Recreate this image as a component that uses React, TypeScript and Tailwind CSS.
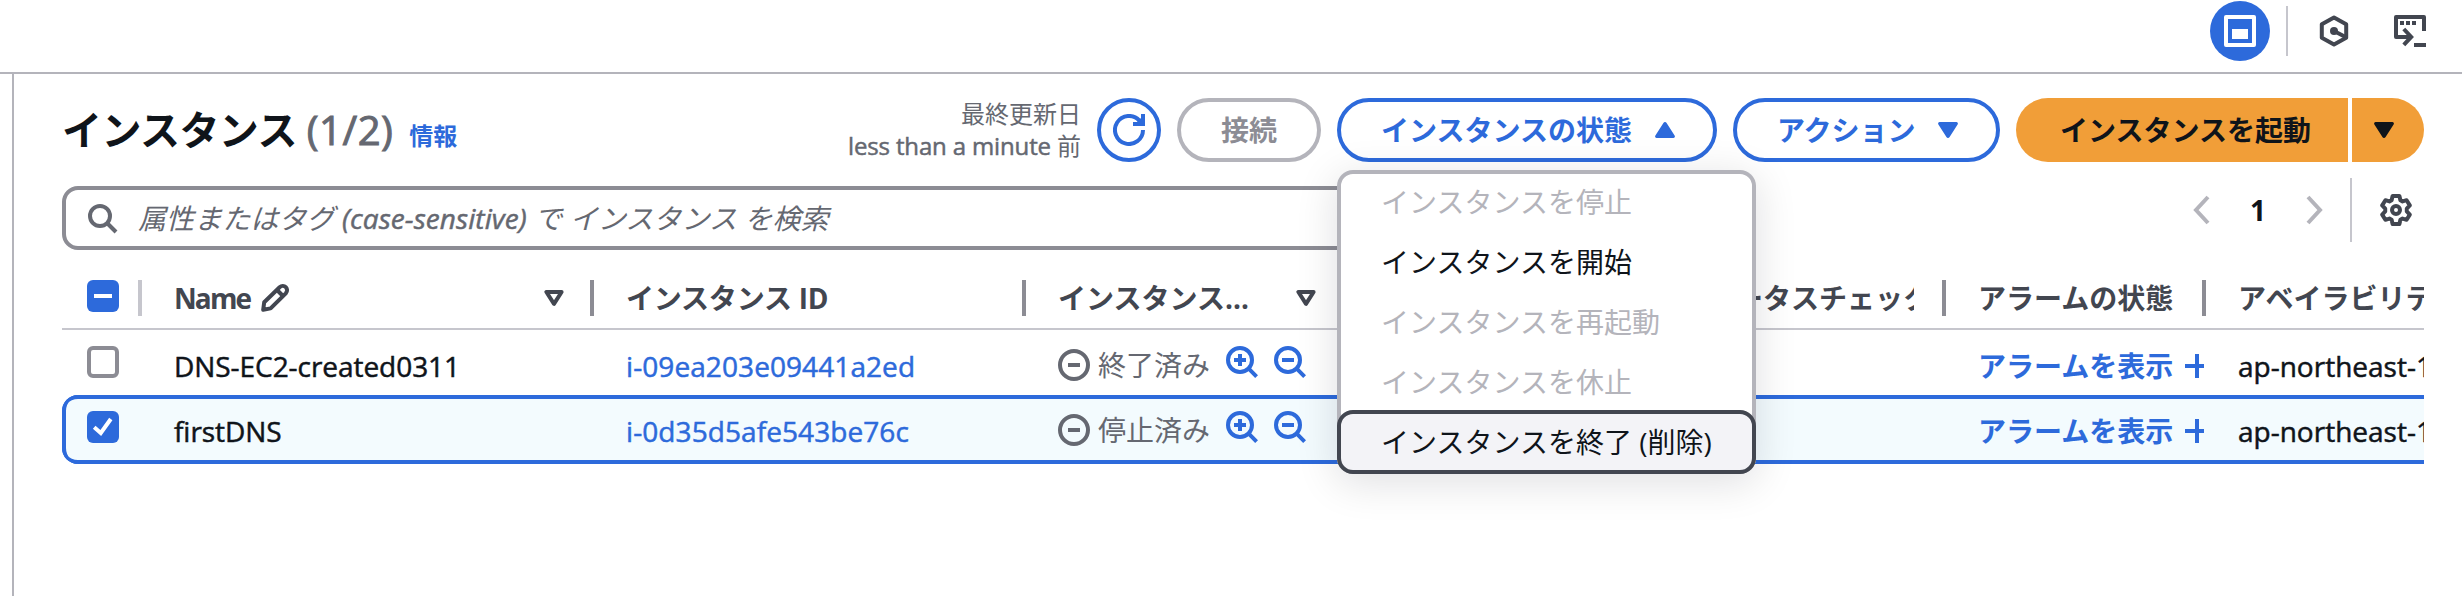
import { ReactNode } from 'react';
import clsx from 'clsx';

const jp = "font-['Open_Sans','Noto_Sans_CJK_JP',sans-serif]";

// slightly heavier latin text, between regular and semibold
const sturdy = '[-webkit-text-stroke:0.5px_currentColor]';

function Icon({ children, className }: { children: ReactNode; className?: string }) {
  return (
    <svg viewBox="0 0 16 16" fill="none" stroke="currentColor" strokeWidth={2} className={clsx('size-8 shrink-0', className)}>
      {children}
    </svg>
  );
}

function Caret({ up, className }: { up?: boolean; className?: string }) {
  return (
    <svg viewBox="0 0 20 16" fill="currentColor" className={clsx('h-4 w-5 shrink-0', up && 'rotate-180', className)}>
      <path d="M1.8 0h16.4a1.6 1.6 0 0 1 1.4 2.5l-8 12.6a1.9 1.9 0 0 1-3.2 0L.4 2.5A1.6 1.6 0 0 1 1.8 0Z" />
    </svg>
  );
}

function SortCaret() {
  return (
    <svg viewBox="0 0 20 16" fill="none" stroke="currentColor" strokeWidth={4} strokeLinejoin="round" className="h-4 w-5 shrink-0">
      <path d="M2.4 2h15.2L10 13.8Z" />
    </svg>
  );
}

const SearchIcon = () => (
  <Icon className="text-[#656871]">
    <circle cx="7" cy="7" r="5" />
    <path d="m15 15-4.5-4.5" />
  </Icon>
);

const ZoomIcon = ({ plus }: { plus?: boolean }) => (
  <Icon>
    <circle cx="7" cy="7" r="6" />
    <path d="m15.3 15.3-4.2-4.2M4 7h6" />
    {plus && <path d="M7 4v6" />}
  </Icon>
);

const StoppedIcon = () => (
  <Icon className="text-[#656871]">
    <circle cx="8" cy="8" r="7" />
    <path d="M5 8h6" />
  </Icon>
);

function Checkbox({ state }: { state: 'on' | 'off' | 'mixed' }) {
  if (state === 'off') {
    return <span className="block size-8 shrink-0 rounded-md border-4 border-[#8c8c94] bg-white" />;
  }
  return (
    <span className="block size-8 shrink-0 rounded-md bg-[#2d6adb] text-white">
      <Icon>{state === 'on' ? <path d="m3.6 8.1 3.3 2.9 5-7" /> : <path d="M3.5 8h9" />}</Icon>
    </span>
  );
}

function Divider({ light }: { light?: boolean }) {
  return <span className={clsx('h-9 w-1 shrink-0', light ? 'bg-[#c6c6cd]' : 'bg-[#8c8c94]')} />;
}

const cols = 'grid grid-cols-[80px_452px_432px_620px_300px_260px_218px] w-[2362px]';

const rows = [
  { name: 'DNS-EC2-created0311', id: 'i-09ea203e09441a2ed', state: '終了済み', selected: false },
  { name: 'firstDNS', id: 'i-0d35d5afe543be76c', state: '停止済み', selected: true },
];

const menu = [
  { label: 'インスタンスを停止', disabled: true },
  { label: 'インスタンスを開始' },
  { label: 'インスタンスを再起動', disabled: true },
  { label: 'インスタンスを休止', disabled: true },
  { label: 'インスタンスを終了 (削除)', active: true },
];

function TopBar() {
  return (
    <header className="flex h-[74px] items-start justify-end border-b-2 border-[#b4b4bb] pr-9 text-[#424650]">
      <span className="mt-px flex size-[60px] items-center justify-center rounded-full bg-[#2d6adb] text-white">
        <Icon>
          <path d="M1 1h14v14H1z" strokeLinejoin="round" />
          <path d="M4 7h8v5H4z" fill="currentColor" stroke="none" />
        </Icon>
      </span>
      <span className="mt-1.5 ml-4 h-[50px] w-0.5 bg-[#c6c6cd]" />
      <Icon className="mt-[15px] ml-[30px]">
        <path d="M8 1.2 14.1 4.6v6.8L8 14.8 1.9 11.4V4.6Z" strokeLinejoin="round" />
        <circle cx="8" cy="8" r="2" fill="currentColor" stroke="none" />
        <path d="m8 8 5.5 2.9" />
      </Icon>
      <Icon className="mt-[15px] ml-11">
        <path d="M15 8V1H1v10h7.5" strokeLinejoin="round" />
        <path d="M4.9 7 8.6 11 4.9 14.9M10 15h6" />
        <path d="M3 4h2M6 4h2M9 4h2" />
      </Icon>
    </header>
  );
}

function StateMenu() {
  return (
    <ul className="absolute top-[72px] left-0 z-10 w-[419px] rounded-2xl bg-white shadow-[0_8px_40px_2px_rgba(0,7,22,0.12)] ring-4 ring-[#b4b4bb] ring-inset">
      {menu.map((m, i) => (
        <li
          key={m.label}
          className={clsx(
            'flex h-16 items-center rounded-2xl border-4 px-10 whitespace-nowrap',
            i > 0 && '-mt-1',
            m.active ? 'border-[#424650] bg-[#f3f3f7]' : 'border-transparent',
            m.disabled ? 'text-[#b4b4bb]' : 'text-[#0f141a]',
          )}
        >
          {m.label}
        </li>
      ))}
    </ul>
  );
}

function Toolbar() {
  const pill = 'flex h-16 items-center rounded-full border-4 font-bold';
  return (
    <div className="flex h-16 items-center">
      <h1 className="flex items-baseline text-[40px] leading-[50px] font-bold tracking-[-0.6px] text-[#0f141a]">
        インスタンス
        <span className="ml-2.5 font-normal tracking-[0.5px] text-[#656871] [-webkit-text-stroke:1px_currentColor]">(1/2)</span>
        <a className="ml-4 text-2xl font-bold tracking-normal text-[#2d6adb]">情報</a>
      </h1>
      <p className="mr-4 ml-auto text-right text-2xl leading-8 text-[#656871]">
        最終更新日
        <br />
        <span className={clsx('tracking-[-0.15px]', sturdy)}>less than a minute </span>前
      </p>
      <button className={clsx(pill, 'mr-4 w-16 justify-center border-[#2d6adb] text-[#2d6adb]')}>
        <Icon>
          <path d="M15 8A7 7 0 1 1 13.2 3.3" />
          <path d="M15 0v5h-5" />
          <path d="m11 5 4-4v4Z" fill="currentColor" stroke="none" />
        </Icon>
      </button>
      <button className={clsx(pill, 'mr-4 border-[#b4b4bb] px-10 text-[#8c8c94]')}>接続</button>
      <div className="relative mr-4">
        <button className={clsx(pill, 'w-[380px] justify-between border-[#2d6adb] pr-[38px] pl-10 text-[#2d6adb]')}>
          インスタンスの状態
          <Caret up />
        </button>
        <StateMenu />
      </div>
      <button className={clsx(pill, 'mr-4 w-[267px] justify-between border-[#2d6adb] pr-[38px] pl-10 text-[#2d6adb]')}>
        アクション
        <Caret />
      </button>
      <div className="flex gap-1 font-bold text-[#0f141a]">
        <button className="flex h-16 w-[332px] items-center rounded-l-full bg-[#f19e38] pl-11">インスタンスを起動</button>
        <button className="flex h-16 w-[72px] items-center rounded-r-full bg-[#f19e38] pl-[22px]">
          <Caret />
        </button>
      </div>
    </div>
  );
}

function FilterBar() {
  return (
    <div className="mt-4 flex h-16 items-center">
      <label className="mt-4 flex h-16 w-[1600px] items-center gap-5 rounded-2xl border-4 border-[#8c8c94] bg-white pl-5 text-[#656871] italic">
        <SearchIcon />
        <span className="tracking-[0.08px]">
          属性またはタグ <span className={sturdy}>(case-sensitive)</span> で インスタンス を検索
        </span>
      </label>
      <div className="ml-auto flex items-center text-[#b4b4bb]">
        <Icon>
          <path d="M11 1.5 5 8l6 6.5" />
        </Icon>
        <span className="w-[80px] text-center font-bold text-[#0f141a]">1</span>
        <Icon>
          <path d="m5 1.5 6 6.5-6 6.5" />
        </Icon>
        <span className="mr-7 ml-5 h-16 w-0.5 bg-[#c6c6cd]" />
        <Icon className="mr-3 text-[#424650]">
          <path
            strokeLinejoin="round"
            d="M6.3 1h3.4l.5 2.1 1.1.6 2-.6 1.6 2.6L13.400 7.300v1.400l1.500 1.600-1.600 2.600-2-.6-1.100.6-.5 2.100H6.300l-.5-2.100-1.100-.6-2 .6-1.600-2.600L2.600 8.700V7.300L1.100 5.700l1.600-2.600 2 .6 1.100-.6Z"
          />
          <circle cx="8" cy="8" r="2" />
        </Icon>
      </div>
    </div>
  );
}

function HeaderRow() {
  return (
    <div className={clsx(cols, 'h-[66px] border-b-2 border-[#c6c6cd] pt-4 font-bold text-[#424650]')}>
      <div className="flex gap-[19px] pl-[25px]">
        <Checkbox state="mixed" />
        <Divider light />
      </div>
      <div className="flex h-9 items-center pl-8">
        <span className="w-[77px] tracking-[-1.9px]">Name</span>
        <Icon className="ml-2">
          <path d="M2.1 13.9 2.6 10.1 10.3 2.6c1-.9 2.3-.8 3.1 0s.9 2.1 0 3.1L5.8 13.2Z" strokeLinejoin="round" />
          <path d="m9 4 3 3" />
        </Icon>
        <span className="ml-auto" />
        <SortCaret />
        <span className="w-[26px]" />
        <Divider />
      </div>
      <div className="flex h-9 items-center justify-between pl-8 tracking-[-0.2px]">
        インスタンス ID
        <Divider />
      </div>
      <div className="flex h-9 items-center pl-8">
        <span className="w-[238px]">インスタンス…</span>
        <SortCaret />
      </div>
      <div className="flex h-9 items-center justify-between">
        <span className="ml-[33px] w-[235px] overflow-hidden whitespace-nowrap">ステータスチェック</span>
        <Divider />
      </div>
      <div className="flex h-9 items-center justify-between pl-8">
        アラームの状態
        <Divider />
      </div>
      <div className="h-9 overflow-hidden pl-8 leading-9 whitespace-nowrap">アベイラビリティーゾーン</div>
    </div>
  );
}

function InstanceRow({ row }: { row: (typeof rows)[number] }) {
  return (
    <div
      className={clsx(
        cols,
        'pt-4 text-[#0f141a]',
        row.selected
          ? 'h-[69px] rounded-l-2xl bg-[#f3fbfe] shadow-[inset_4px_0_0_#2d6adb,inset_0_4px_0_#2d6adb,inset_0_-4px_0_#2d6adb]'
          : 'h-[65px]',
      )}
    >
      <div className="pl-[25px]">
        <Checkbox state={row.selected ? 'on' : 'off'} />
      </div>
      <div className={clsx('h-10 pl-8 leading-10 tracking-[-0.05px]', sturdy)}>{row.name}</div>
      <div className={clsx('h-10 pl-8 leading-10 tracking-[0.08px] text-[#2d6adb]', sturdy)}>{row.id}</div>
      <div className="flex h-[38px] items-center pl-8 text-[#656871]">
        <StoppedIcon />
        <span className="mr-4 ml-2">{row.state}</span>
        <span className="-mt-1.5 flex gap-4 text-[#2d6adb]">
          <ZoomIcon plus />
          <ZoomIcon />
        </span>
      </div>
      <div />
      <div className="mr-0.5 flex h-10 items-center overflow-hidden pl-8 font-bold whitespace-nowrap text-[#2d6adb]">
        アラームを表示
        <Icon className="ml-2">
          <path d="M2 8h12M8 2v12" />
        </Icon>
      </div>
      <div className={clsx('h-10 overflow-hidden pl-8 leading-10 whitespace-nowrap', sturdy)}>ap-northeast-1c</div>
    </div>
  );
}

export default function App() {
  return (
    <div className={clsx(jp, 'h-[596px] w-[2462px] overflow-hidden bg-white text-[28px] leading-9')}>
      <TopBar />
      <main className="ml-3 h-[522px] border-l-2 border-[#b4b4bb] pt-6 pr-[38px] pl-12">
        <Toolbar />
        <FilterBar />
        <div className="mt-[22px]">
          <HeaderRow />
          {rows.map((r) => (
            <InstanceRow key={r.id} row={r} />
          ))}
        </div>
      </main>
    </div>
  );
}
